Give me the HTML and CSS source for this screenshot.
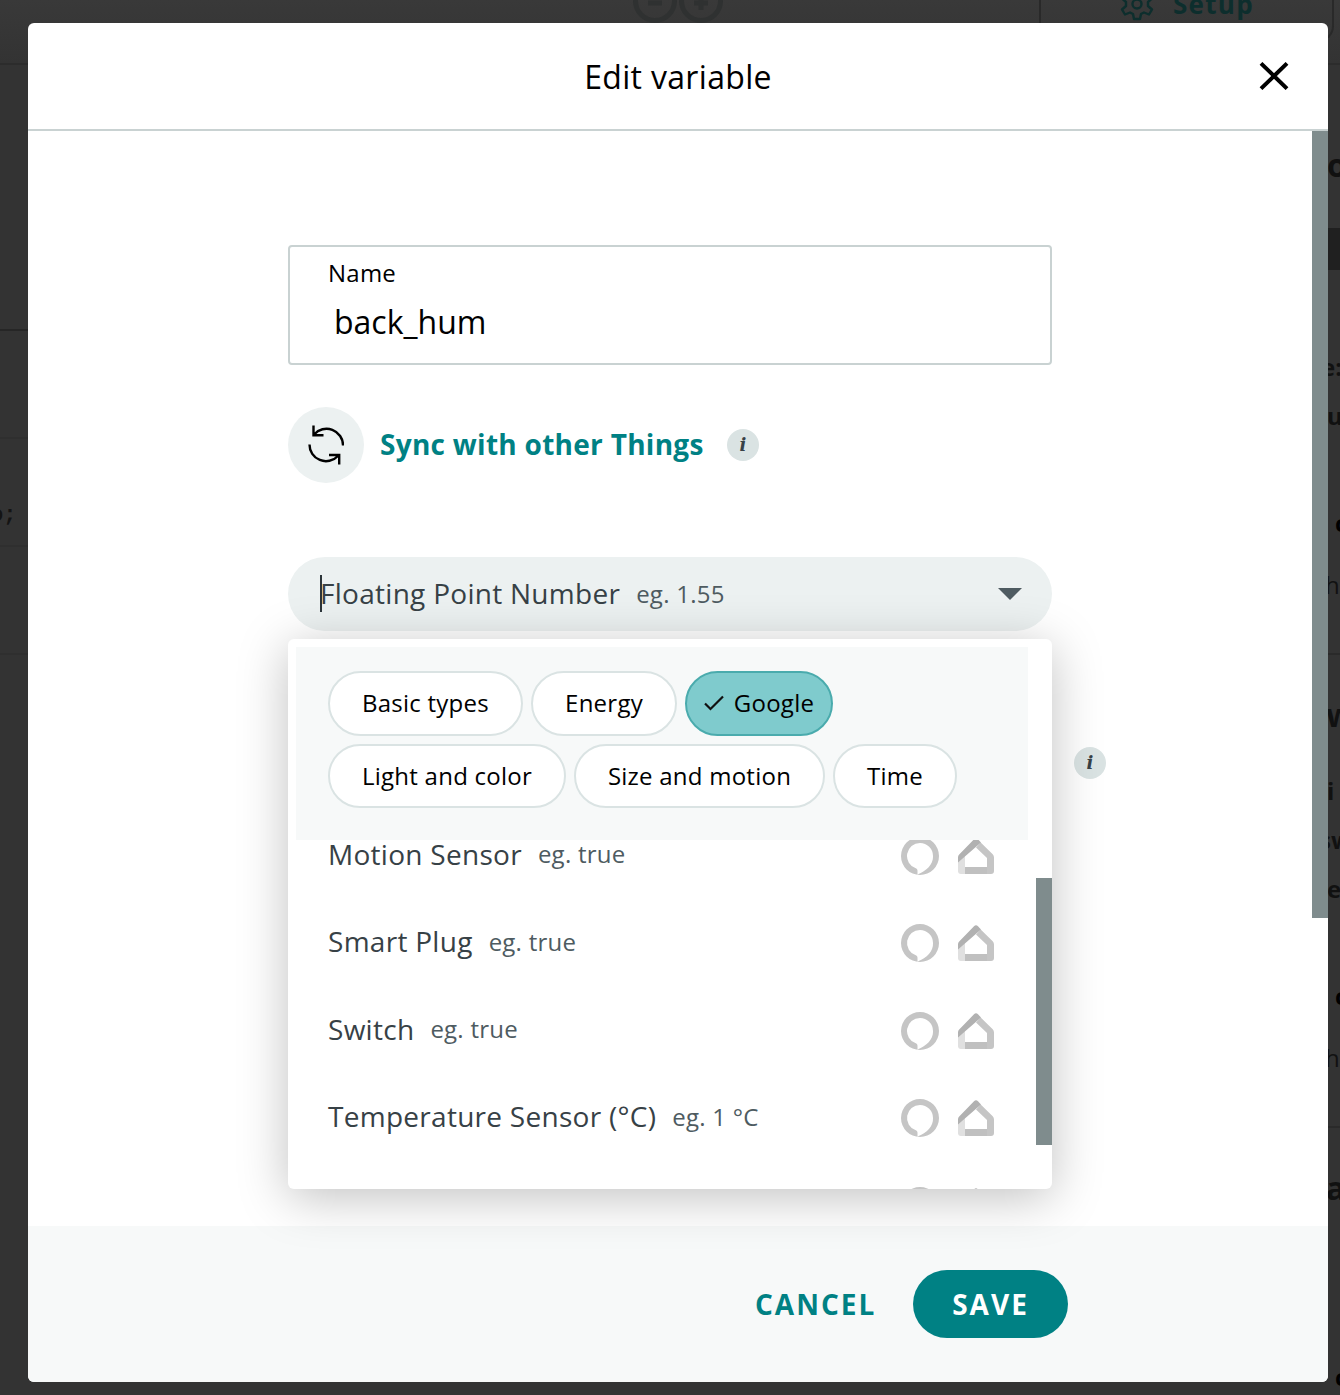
FILE: index.html
```
<!DOCTYPE html>
<html lang="en">
<head>
  <meta charset="UTF-8">
  <meta name="viewport" content="width=device-width, initial-scale=1.0">
  <title>Edit variable</title>
  <link rel="stylesheet" href="styles.css">
</head>
<body>
  <svg class="defs" width="0" height="0">
    <symbol id="alexa" viewBox="0 0 38 38">
      <path fill="#c5c5c5" fill-rule="evenodd" d="M19 0a19 19 0 1 1 0 38a19 19 0 0 1 0-38zM19 6a13 13 0 0 0-4.200 25.300c1.400.6 1.700 1.500 1.700 2.700v3.600C26 34 32.500 27 32 19A13 13 0 0 0 19 6z"/>
    </symbol>
    <symbol id="home" viewBox="0 0 36 36">
      <path fill="#e0e0e0" d="M0 21l7-3v18H3a3 3 0 0 1-3-3z"/>
      <path fill="#c0c0c0" d="M7 29h22v7H7z"/>
      <path fill="#c5c5c5" d="M18 9.500L22.700 4.500L34.700 16.300Q36 17.600 36 19.500V33a3 3 0 0 1-3 3h-4V20z"/>
      <path fill="#b1b1b1" d="M0 24.500v-5.200Q0 17.600 1.200 16.400L16 1.300Q18 -.7 20 1.300L23 4.400z"/>
    </symbol>
  </svg>

  <div class="page">
    <div class="topbar">
      <svg class="logo" width="92" height="46" viewBox="0 0 92 46">
        <g fill="none" stroke="#2f3131" stroke-width="5">
          <circle cx="23" cy="23" r="19.500"/>
          <circle cx="69" cy="23" r="19.500"/>
          <path d="M16 25h14M62 25h14M69 18v14"/>
        </g>
      </svg>
      <div class="setup-tab">
        <svg width="34" height="34" viewBox="0 0 34 34" fill="none" stroke="#0d2e2d" stroke-width="2.400" stroke-linejoin="round">
          <path d="M14 2h6l1 5l3 1.500l5-2l3 5l-4 3.500v4l4 3.500l-3 5l-5-2l-3 1.500l-1 5h-6l-1-5l-3-1.500l-5 2l-3-5l4-3.500v-4l-4-3.500l3-5l5 2l3-1.500z"/>
          <circle cx="17" cy="17" r="4.500"/>
        </svg>
        <span>Setup</span>
      </div>
    </div>
    <div class="columns">
      <div class="code">
        <div class="code-line tall"></div>
        <div class="code-line"></div>
        <div class="code-line">o;</div>
        <div class="code-line"></div>
      </div>
      <div class="sidebar">
        <div class="row big first">o</div>
        <div class="band"></div>
        <div class="row type">e:</div>
        <div class="row">u</div>
        <div class="row change">c</div>
        <div class="row light">h</div>
        <div class="row big section">w</div>
        <div class="row">i</div>
        <div class="row wide">sw</div>
        <div class="row">e</div>
        <div class="row change">c</div>
        <div class="row light">h</div>
        <div class="row big section">a</div>
        <div class="row change last">c</div>
      </div>
    </div>
  </div>

  <div class="modal">
    <div class="modal-header">
      <h1>Edit variable</h1>
      <svg class="close" width="30" height="28" viewBox="0 0 30 28" stroke="#000" stroke-width="4">
        <path d="M2 1.400L28 26.600M28 1.400L2 26.600"/>
      </svg>
    </div>

    <div class="modal-body">
      <div class="form">
        <div class="name-field">
          <label>Name</label>
          <div class="value">back_hum</div>
        </div>

        <div class="sync">
          <div class="sync-icon">
            <svg width="36" height="40" viewBox="0 0 36 40" fill="none" stroke="#000" stroke-width="2.400">
              <path d="M35 20.500A16.500 16.500 0 0 0 6 9.500M5.500 .5V10.200H15.500"/>
              <path d="M1.500 19.500A16.500 16.500 0 0 0 30 31M21 30H31.200V39.500"/>
            </svg>
          </div>
          <span class="sync-label">Sync with other Things</span>
          <span class="info">i</span>
        </div>

        <div class="select">
          <span class="caret"></span>
          <span class="type-name">Floating Point Number</span>
          <span class="example">eg. 1.55</span>
          <span class="arrow"></span>

          <div class="dropdown">
            <div class="filters">
              <div class="chip-row">
                <span class="chip basic">Basic types</span>
                <span class="chip energy">Energy</span>
                <span class="chip active">
                  <svg width="20" height="16" viewBox="0 0 20 16" fill="none" stroke="#111" stroke-width="2.200"><path d="M1 8.500L6.500 14L19 1.500"/></svg>
                  Google
                </span>
              </div>
              <div class="chip-row">
                <span class="chip light-color">Light and color</span>
                <span class="chip size">Size and motion</span>
                <span class="chip time">Time</span>
              </div>
            </div>
            <div class="options">
              <div class="option">
                <span class="type-name">Motion Sensor</span><span class="example">eg. true</span>
                <div class="icons"><svg width="38" height="38"><use href="#alexa"/></svg><svg width="36" height="36"><use href="#home"/></svg></div>
              </div>
              <div class="option">
                <span class="type-name">Smart Plug</span><span class="example">eg. true</span>
                <div class="icons"><svg width="38" height="38"><use href="#alexa"/></svg><svg width="36" height="36"><use href="#home"/></svg></div>
              </div>
              <div class="option">
                <span class="type-name">Switch</span><span class="example">eg. true</span>
                <div class="icons"><svg width="38" height="38"><use href="#alexa"/></svg><svg width="36" height="36"><use href="#home"/></svg></div>
              </div>
              <div class="option">
                <span class="type-name">Temperature Sensor (°C)</span><span class="example">eg. 1 °C</span>
                <div class="icons"><svg width="38" height="38"><use href="#alexa"/></svg><svg width="36" height="36"><use href="#home"/></svg></div>
              </div>
              <div class="option">
                <div class="icons"><svg width="38" height="38"><use href="#alexa"/></svg><svg width="36" height="36"><use href="#home"/></svg></div>
              </div>
            </div>
            <div class="dropdown-scroll"></div>
          </div>
        </div>

        <div class="permission">
          <span class="info">i</span>
        </div>
      </div>
      <div class="body-scroll"></div>
    </div>

    <div class="modal-footer">
      <span class="cancel">CANCEL</span>
      <span class="save">SAVE</span>
    </div>
  </div>
</body>
</html>
```

FILE: styles.css
```
* {
  box-sizing: border-box;
}
body {
  margin: 0;
  height: 1395px;
  position: relative;
  overflow: hidden;
  background: #333;
  color: #000;
  font-family: "Open Sans", sans-serif;
}
.defs {
  position: absolute;
}

/* page under the overlay */
.page {
  height: 1395px;
  overflow: hidden;
}
.topbar {
  height: 65px;
  display: flex;
  justify-content: flex-end;
  border-bottom: 2px solid #2c2c2c;
  background: linear-gradient(#393939, #333);
}
.logo {
  margin: -22px 315px 0 0;
}
.setup-tab {
  width: 295px;
  height: 42px;
  margin-right: 6px;
  padding-left: 79px;
  border: 2px solid #292929;
  border-top: none;
  border-radius: 0 0 16px 0;
  display: flex;
  gap: 19px;
  color: #0d2e2d;
  font-size: 26px;
  font-weight: 700;
  line-height: 34px;
  letter-spacing: 1.300px;
}
.setup-tab svg {
  margin-top: -13px;
}
.setup-tab span {
  margin-top: -13px;
}
.columns {
  display: flex;
  justify-content: space-between;
}
.code {
  width: 28px;
  color: #141414;
  font: bold 22px "Liberation Mono", monospace;
}
.code-line {
  height: 108px;
  border-bottom: 2px solid #2f2f2f;
  line-height: 154px;
  text-indent: -10px;
}
.code-line.tall {
  height: 266px;
  border-color: #262626;
}
.sidebar {
  width: 12px;
  overflow: hidden;
  color: #111;
  font-size: 24px;
  font-weight: 700;
  white-space: nowrap;
}
.row {
  height: 49px;
  line-height: 46px;
  text-indent: -1px;
}
.row.big {
  font-size: 32px;
}
.row.first {
  margin-top: 77px;
}
.band {
  height: 42px;
  margin: 37px 0 74px;
  background: #202020;
}
.row.type {
  text-indent: -7px;
}
.row.wide {
  text-indent: -9px;
}
.row.change {
  height: 48px;
  margin-top: 58px;
  text-indent: 7px;
  color: #000;
}
.row.light {
  height: 107px;
  font-weight: 400;
  line-height: 74px;
  text-indent: -3px;
  border-bottom: 2px solid #2a2a2a;
}
.row.section {
  height: 75px;
  padding-top: 37px;
  margin-bottom: 38px;
  text-indent: -2px;
}
.row.last {
  margin-top: 151px;
}

.modal {
  position: absolute;
  left: 28px;
  top: 23px;
  width: 1300px;
  height: 1359px;
  border-radius: 6px;
  overflow: hidden;
  background: #fff;
  display: flex;
  flex-direction: column;
}
.modal-header {
  height: 108px;
  flex: none;
  display: grid;
  grid-template-columns: 30px 1fr 30px;
  align-items: center;
  padding: 0 39px 0 39px;
  border-bottom: 2px solid #c9d2d2;
}
.modal-header h1 {
  grid-column: 2;
  margin: 0;
  text-align: center;
  font-size: 32px;
  font-weight: 400;
  letter-spacing: 0.320px;
}
.modal-body {
  flex: 1;
  display: flex;
  justify-content: space-between;
}
.form {
  width: 764px;
  margin: 114px 0 0 260px;
}
.name-field {
  height: 120px;
  padding: 11px 38px;
  border: 2px solid #c9d2d2;
  border-radius: 4px;
}
.name-field label {
  display: block;
  font-size: 24px;
  line-height: 30px;
  letter-spacing: 0.240px;
}
.name-field .value {
  padding: 12px 6px 0;
  font-size: 32px;
  line-height: 44px;
}
.sync {
  height: 76px;
  margin-top: 42px;
  display: flex;
  align-items: center;
}
.sync-icon {
  width: 76px;
  height: 76px;
  margin-right: 16px;
  border-radius: 50%;
  background: #ecf1f1;
  display: flex;
  align-items: center;
  justify-content: center;
}
.sync-label {
  width: 347px;
  padding-bottom: 2px;
  color: #008184;
  font-size: 28px;
  font-weight: 700;
  letter-spacing: 0.280px;
  white-space: nowrap;
}
.info {
  width: 32px;
  height: 32px;
  flex: none;
  border-radius: 50%;
  background: #dae3e3;
  color: #374146;
  font: italic bold 18px/31px "DejaVu Serif", serif;
  text-align: center;
}
.select {
  position: relative;
  z-index: 1;
  height: 74px;
  margin-top: 74px;
  padding: 0 30px 0 32px;
  border-radius: 37px;
  background: #ecf1f1;
  display: flex;
  align-items: center;
}
.caret {
  width: 2px;
  height: 37px;
  margin: 0 -2px 2px 0;
  background: #2c353a;
}
.type-name {
  padding-bottom: 2px;
  color: #374146;
  font-size: 28px;
  letter-spacing: 0.280px;
}
.example {
  margin-left: 16px;
  padding-bottom: 2px;
  color: #4e5b61;
  font-size: 24px;
  letter-spacing: 0.240px;
}
.arrow {
  margin-left: auto;
  border: 12px solid transparent;
  border-top-color: #4e5b61;
  border-bottom: none;
}
.dropdown {
  position: absolute;
  left: 0;
  top: 82px;
  width: 764px;
  height: 550px;
  padding-top: 8px;
  border-radius: 6px;
  overflow: hidden;
  background: #fff;
}
/* shadow spills over the select and footer */
.select::after {
  content: "";
  position: absolute;
  left: 0;
  top: 82px;
  width: 764px;
  height: 550px;
  border-radius: 6px;
  box-shadow: 0 8px 50px rgba(0, 0, 0, 0.250);
}
.filters {
  width: 732px;
  height: 193px;
  margin-left: 8px;
  padding: 24px 32px;
  background: #f7f9f9;
}
.chip-row {
  display: flex;
  gap: 8px;
  margin-bottom: 8px;
}
.chip {
  height: 64.500px;
  padding-bottom: 1px;
  border: 2px solid #dae3e3;
  border-radius: 33px;
  background: #fff;
  display: flex;
  align-items: center;
  justify-content: center;
  gap: 10px;
  font-size: 24px;
  letter-spacing: 0.240px;
  white-space: nowrap;
}
.chip.basic {
  width: 195px;
}
.chip.energy {
  width: 146px;
}
.chip.active {
  width: 148px;
  background: #7fcbcd;
  border-color: #4aabad;
}
.chip.light-color {
  width: 238px;
}
.chip.size {
  width: 251px;
}
.chip.time {
  width: 124px;
}
.options {
  height: 349px;
  padding: 0 58px 0 40px;
  overflow: hidden;
}
.option {
  height: 87.500px;
  display: flex;
  align-items: center;
}
.option:first-child {
  margin-top: -29px;
}
.icons {
  margin-left: auto;
  padding-top: 2px;
  display: flex;
  align-items: center;
  gap: 19px;
}
.dropdown-scroll {
  position: absolute;
  right: 0;
  top: 239px;
  width: 16px;
  height: 267px;
  background: #7f8c8d;
}
.permission {
  margin: 116px 0 0 786px;
  display: flex;
}
.body-scroll {
  width: 16px;
  height: 787px;
  background: #7f8c8d;
}
.modal-footer {
  height: 156px;
  flex: none;
  padding-right: 260px;
  background: #f7f9f9;
  display: flex;
  align-items: center;
  justify-content: flex-end;
  font-size: 28px;
  font-weight: 700;
}
.cancel {
  width: 158px;
  color: #008184;
  letter-spacing: 2px;
}
.save {
  width: 155px;
  height: 68px;
  border-radius: 34px;
  background: #008184;
  color: #fff;
  letter-spacing: 2px;
  line-height: 68px;
  text-align: center;
}
```
